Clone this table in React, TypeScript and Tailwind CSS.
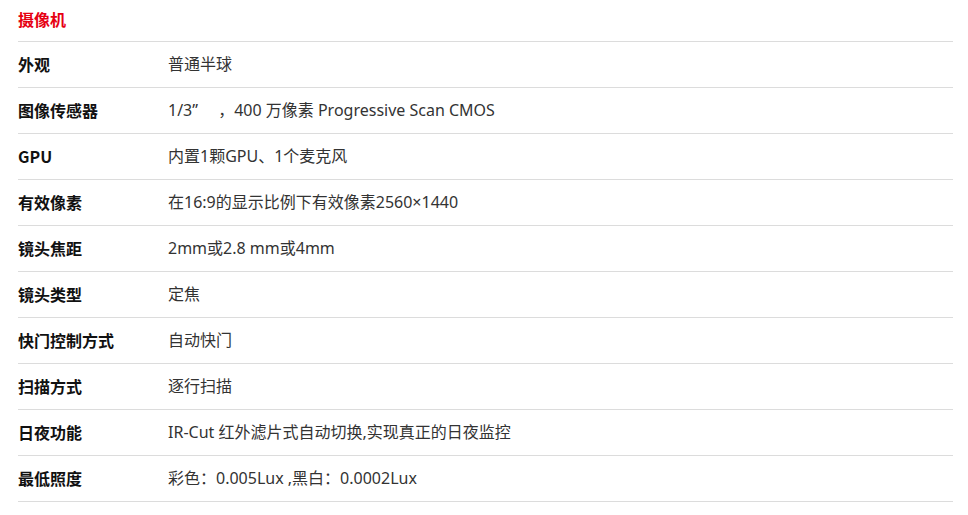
import React from "react";

const rows: [string, string][] = [
  ["外观", "普通半球"],
  ["图像传感器", "1/3\u201d\u3000 ，400 万像素 Progressive Scan CMOS"],
  ["GPU", "内置1颗GPU、1个麦克风"],
  ["有效像素", "在16:9的显示比例下有效像素2560×1440"],
  ["镜头焦距", "2mm或2.8 mm或4mm"],
  ["镜头类型", "定焦"],
  ["快门控制方式", "自动快门"],
  ["扫描方式", "逐行扫描"],
  ["日夜功能", "IR-Cut 红外滤片式自动切换,实现真正的日夜监控"],
  ["最低照度", "彩色：0.005Lux ,黑白：0.0002Lux"],
];

export default function App() {
  return (
    <div
      className="w-[968px] h-[515px] bg-white pl-[18px]"
      style={{ fontFamily: '"Noto Sans CJK SC", "Noto Sans", sans-serif' }}
    >
      <div className="w-[935px]">
        <div className="h-[42px] flex items-center border-b border-[#dcdcdc] pb-[4px]">
          <span className="text-[16px] font-bold text-[#e60012] leading-none">摄像机</span>
        </div>
        {rows.map(([k, v]) => (
          <div key={k} className="h-[46px] flex items-center border-b border-[#dcdcdc] pb-[2px]">
            <div className="w-[150px] text-[16px] font-bold text-[#111] leading-none">{k}</div>
            <div
              className="text-[16px] text-[#333] leading-none"
              style={{ fontFamily: '"Noto Sans", "Noto Sans CJK SC", sans-serif' }}
            >
              {v}
            </div>
          </div>
        ))}
      </div>
    </div>
  );
}
